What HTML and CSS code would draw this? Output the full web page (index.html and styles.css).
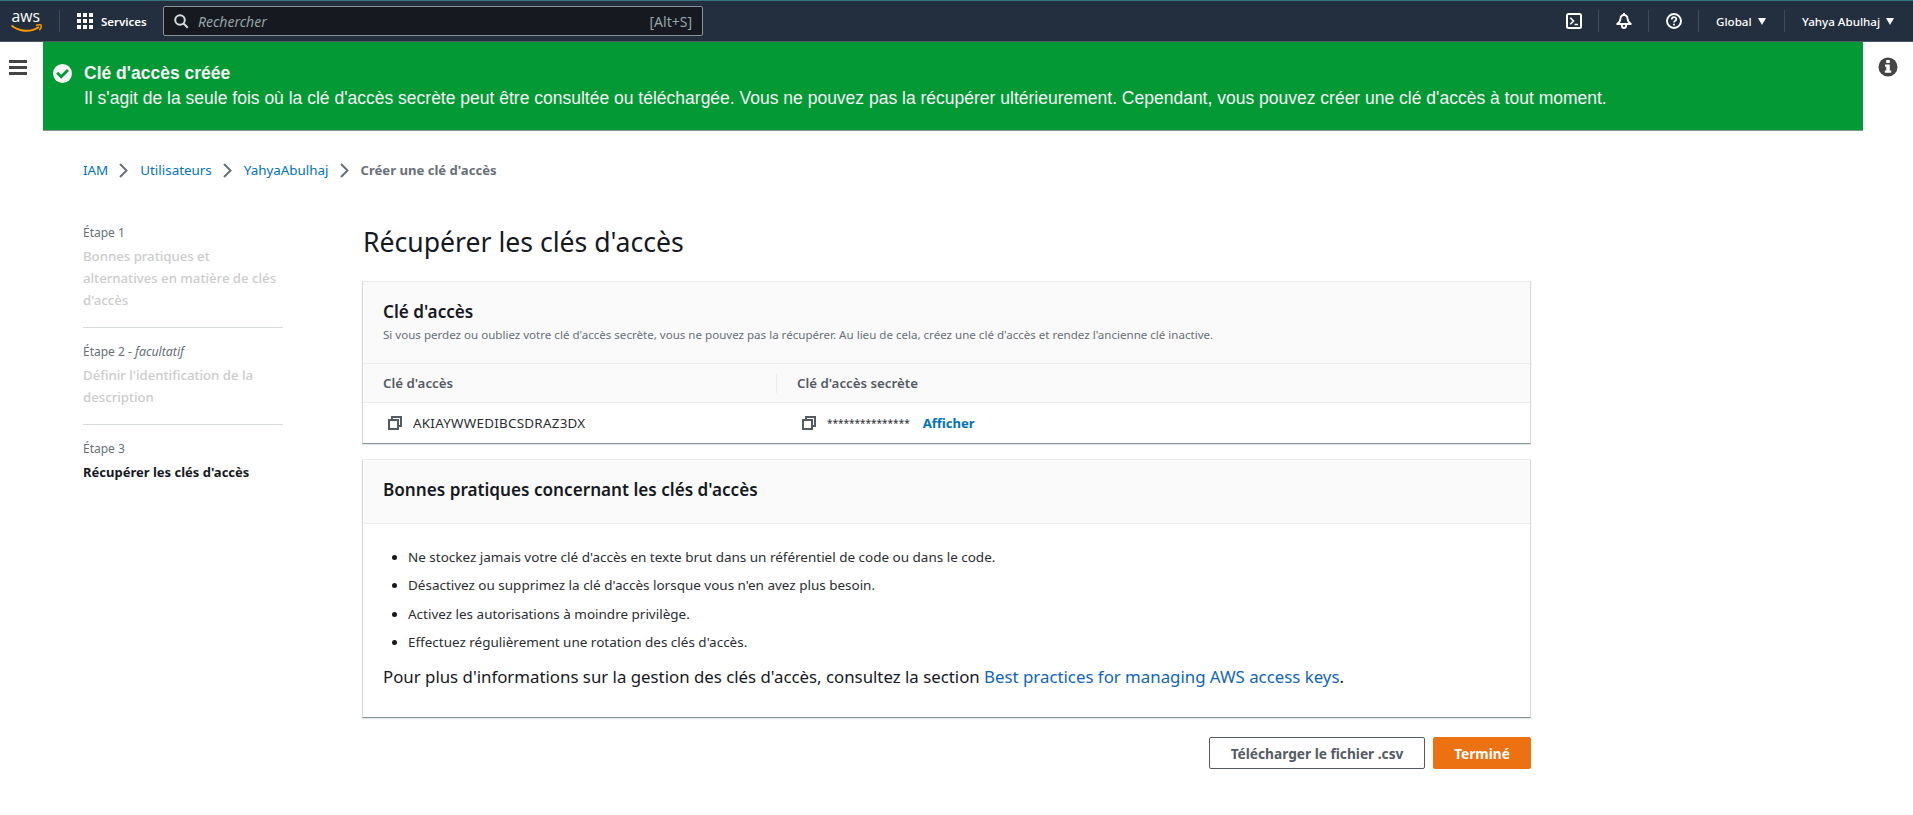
FILE: index.html
```
<!DOCTYPE html>
<html lang="fr">
<head>
<meta charset="utf-8">
<title>Créer une clé d'accès</title>
<link rel="stylesheet" href="styles.css">
</head>
<body>
<header class="topnav">
  <svg class="logo" width="34" height="38" viewBox="0 0 34 38"><text x="0.500" y="19.500" class="logo-word" textLength="28.500" lengthAdjust="spacingAndGlyphs">aws</text><path d="M0.500 23.500C8 30 20 30.500 28 25" fill="none" stroke="#f90" stroke-width="1.900"/><path d="M25 23.500C27.500 22.500 30 22.700 30.200 23.200C30.500 24.300 29.800 26.500 28.300 28.200" fill="none" stroke="#f90" stroke-width="1.500"/></svg>
  <i class="sep sep-logo"></i>
  <svg class="grid-icon" width="16" height="16" viewBox="0 0 16 16" fill="#fff"><path d="M0 0h4v4H0zM6 0h4v4H6zM12 0h4v4h-4zM0 6h4v4H0zM6 6h4v4H6zM12 6h4v4h-4zM0 12h4v4H0zM6 12h4v4H6zM12 12h4v4h-4z"/></svg>
  <span class="services">Services</span>
  <div class="search">
    <svg width="15" height="15" viewBox="0 0 15 15" fill="none" stroke="#d5dbdb" stroke-width="2"><circle cx="6" cy="6" r="4.800"/><path d="M9.500 9.500l4.300 4.300"/></svg>
    <em>Rechercher</em><span class="hint">[Alt+S]</span>
  </div>
  <div class="nav-right">
    <span class="nav-icon"><svg width="16" height="16" viewBox="0 0 16 16" fill="none" stroke="#fff" stroke-width="2"><rect x="1" y="1" width="14" height="14" rx="1.500"/><path d="M4.300 4.800L7.500 8l-3.200 3.200M8.500 11.500H12" stroke-width="1.600"/></svg></span>
    <i class="sep"></i>
    <span class="nav-icon"><svg width="16" height="16" viewBox="0 0 16 16" fill="none" stroke="#fff" stroke-width="1.900" stroke-linejoin="round"><path d="M1.200 11C3.300 9.500 4.300 8.500 4.500 5.500a3.500 3.500 0 0 1 7 0c.2 3 1.200 4 3.300 5.500zM8 2V0M5.800 12a2.200 3 0 0 0 4.400 0"/></svg></span>
    <i class="sep"></i>
    <span class="nav-icon"><svg width="16" height="16" viewBox="0 0 16 16" fill="none" stroke="#fff" stroke-width="1.900"><circle cx="8" cy="8" r="7"/><path d="M5.700 6.600C5.700 3.200 10.300 3.500 10.300 6.200C10.300 7.800 8 7.800 8 9.600M8 10.800v1.700" stroke-width="1.700"/></svg></span>
    <i class="sep"></i>
    <span class="menu menu-region"><span>Global</span><i class="caret"></i></span>
    <i class="sep"></i>
    <span class="menu menu-user"><span>Yahya Abulhaj</span><i class="caret"></i></span>
  </div>
</header>
<div class="shell">
  <aside class="rail-left"><svg width="18" height="16" viewBox="0 0 18 16" fill="#444"><path d="M0 0h18v3H0zM0 6h18v3H0zM0 12h18v3H0z"/></svg></aside>
  <div class="center">
    <div class="flash">
      <svg width="19" height="19" viewBox="0 0 19 19"><circle cx="9.500" cy="9.500" r="9.500" fill="#f5f5f5"/><path d="M4.200 8.800l4 4 6.800-6.800" fill="none" stroke="#039a35" stroke-width="2.800"/></svg>
      <div class="flash-text">
        <div><b>Clé d'accès créée</b></div>
        <div><span>Il s'agit de la seule fois où la clé d'accès secrète peut être consultée ou téléchargée. Vous ne pouvez pas la récupérer ultérieurement. Cependant, vous pouvez créer une clé d'accès à tout moment.</span></div>
      </div>
    </div>
    <nav class="crumbs">
      <a>IAM</a><svg class="chev" width="9" height="15" viewBox="0 0 9 15"><path d="M1 1l6.500 6.500L1 14"/></svg>
      <a>Utilisateurs</a><svg class="chev" width="9" height="15" viewBox="0 0 9 15"><path d="M1 1l6.500 6.500L1 14"/></svg>
      <a>YahyaAbulhaj</a><svg class="chev" width="9" height="15" viewBox="0 0 9 15"><path d="M1 1l6.500 6.500L1 14"/></svg>
      <b>Créer une clé d'accès</b>
    </nav>
    <div class="wizard">
      <ol class="steps">
        <li><div class="step-no">Étape 1</div><div class="step-name">Bonnes pratiques et<br>alternatives en matière de clés<br>d'accès</div></li>
        <li><div class="step-no">Étape 2 - <em>facultatif</em></div><div class="step-name">Définir l'identification de la<br>description</div></li>
        <li><div class="step-no">Étape 3</div><div class="step-name current">Récupérer les clés d'accès</div></li>
      </ol>
      <main class="main">
        <h1>Récupérer les clés d'accès</h1>
        <section class="card">
          <div class="card-head head-keys">
            <h2>Clé d'accès</h2>
            <p>Si vous perdez ou oubliez votre clé d'accès secrète, vous ne pouvez pas la récupérer. Au lieu de cela, créez une clé d'accès et rendez l'ancienne clé inactive.</p>
          </div>
          <div class="row row-head"><div class="cell first">Clé d'accès</div><div class="cell">Clé d'accès secrète</div></div>
          <div class="row row-body">
            <div class="cell"><svg class="copy" width="14" height="14" viewBox="0 0 14 14"><path d="M1 4h9v9H1zM4 4V1h9v9h-3"/></svg><span class="key">AKIAYWWEDIBCSDRAZ3DX</span></div>
            <div class="cell"><svg class="copy" width="14" height="14" viewBox="0 0 14 14"><path d="M1 4h9v9H1zM4 4V1h9v9h-3"/></svg><span class="stars">***************</span><a class="show">Afficher</a></div>
          </div>
        </section>
        <section class="card">
          <div class="card-head head-tips"><h2>Bonnes pratiques concernant les clés d'accès</h2></div>
          <div class="tips">
            <ul>
              <li>Ne stockez jamais votre clé d'accès en texte brut dans un référentiel de code ou dans le code.</li>
              <li>Désactivez ou supprimez la clé d'accès lorsque vous n'en avez plus besoin.</li>
              <li>Activez les autorisations à moindre privilège.</li>
              <li>Effectuez régulièrement une rotation des clés d'accès.</li>
            </ul>
            <p class="more">Pour plus d'informations sur la gestion des clés d'accès, consultez la section <a>Best practices for managing AWS access keys</a>.</p>
          </div>
        </section>
        <div class="actions"><button class="btn">Télécharger le fichier .csv</button><button class="btn primary">Terminé</button></div>
      </main>
    </div>
  </div>
  <aside class="rail-right"><svg width="20" height="20" viewBox="0 0 20 20"><circle cx="10" cy="10" r="9.500" fill="#444"/><path d="M8.200 3h3.600v3H8.200zM7 7.500h4.800V13.500H13.200v2.300H6.800v-2.300h1.500V9.800H7z" fill="#fff"/></svg></aside>
</div>
</body>
</html>
```
FILE: styles.css
```
* { box-sizing: border-box; }
body { margin: 0; background: #fff; color: #16191f; font-family: "Noto Sans", sans-serif; font-size: 13px; }
h1, h2, p, ul, ol { margin: 0; padding: 0; font-weight: normal; }
span, a, b, em { white-space: nowrap; }
svg { flex: none; display: block; }
a { color: #0073bb; }

.topnav { height: 42px; display: flex; align-items: center; background: #232f3e; border-top: 1px solid #35757f; border-bottom: 1px solid #4c5664; color: #fff; padding-left: 11px; }
.logo-word { font: 500 17px "Open Sans", sans-serif; fill: #fff; }
.sep { width: 1px; height: 22px; background: #414b58; flex: none; }
.sep-logo { margin-left: 14px; margin-right: 17px; }
.services { width: 70px; padding-left: 8px; font-weight: 600; font-size: 11.5px; }
.search { width: 540px; height: 30px; display: flex; align-items: center; padding: 0 10px 0 10px; background: #161920; border: 1px solid #879596; border-radius: 2px; color: #95a5a6; font-size: 14px; }
.search em { margin-left: 9px; }
.hint { margin-left: auto; }
.nav-right { margin-left: auto; display: flex; align-items: center; font-weight: 500; font-size: 11.6px; }
.nav-icon { width: 49px; display: flex; justify-content: center; }
.menu { display: flex; align-items: center; padding-left: 17px; }
.menu-region { width: 85px; }
.menu-user { width: 128px; }
.caret { margin-left: 6px; border: 4px solid transparent; border-top: 7px solid #fff; border-bottom: 0; }

.shell { display: flex; }
.rail-left { width: 43px; padding: 18px 0 0 9px; flex: none; }
.rail-right { width: 50px; padding: 15px 0 0 15px; flex: none; }
.center { width: 1820px; }
.flash { height: 89px; display: flex; gap: 12px; padding: 22px 9px 0 10px; background: #039a35; border-bottom: 1px solid #879596; color: #f5f5f5; font: 17.5px/25px "Liberation Sans", sans-serif; }
.flash-text { margin-top: -3px; }

.crumbs { display: flex; align-items: center; height: 20px; margin: 29px 0 0 40px; }
.crumbs a { font-size: 13.4px; }
.crumbs b { font-size: 13.1px; color: #687078; }
.chev { margin: 0 11.8px 0 11.2px; fill: none; stroke: #687078; stroke-width: 2; }

.wizard { display: flex; padding: 42px 0 0 40px; }
.steps { width: 200px; list-style: none; flex: none; }
.steps li { border-bottom: 1px solid #d5dbdb; padding-bottom: 16px; margin-bottom: 13px; }
.steps li:last-child { border: 0; }
.step-no { font-size: 12px; line-height: 20px; height: 21px; color: #687078; padding-top: 1px; }
.step-no em { font-size: 12.3px; }
.step-name { font-size: 13.2px; line-height: 22px; padding-top: 2px; font-weight: 500; color: #ccc; white-space: nowrap; }
.current { font-size: 13px; color: #16191f; font-weight: 700; }

.main { width: 1169px; margin-left: 79px; }
h1 { font-size: 26.6px; line-height: 36px; height: 67px; padding-left: 1px; margin-top: -8px; padding-top: 10px; }
.card { border: 1px solid #d5dbdb; border-top-color: #eaeded; border-bottom-color: #879596; margin-bottom: 15px; box-shadow: 0 1px 1px #e3e8e9; }
.card-head { background: #fafafa; border-bottom: 1px solid #eaeded; padding-left: 20px; }
.head-keys { height: 82px; padding-top: 18px; }
.head-tips { height: 64px; padding-top: 18px; }
h2 { font-size: 17.15px; font-weight: 600; line-height: 23px; }
.head-keys p { font-size: 11.57px; line-height: 22px; padding-top: 1px; color: #687078; }
.row { display: grid; grid-template-columns: 414px 1fr; }
.cell { display: flex; align-items: center; padding-left: 20px; }
.row-head { height: 39px; background: #fafafa; border-bottom: 1px solid #eaeded; font-size: 13.3px; font-weight: 600; color: #545b64; }
.row-head .first { border-right: 1px solid #eaeded; height: 19px; align-self: center; }
.row-body { height: 40px; color: #2a2e33; }
.copy { margin: 0 11px 0 5px; fill: none; stroke: #545b64; stroke-width: 2; }
.key { font-size: 13.4px; letter-spacing: 0.26px; }
.stars { font-size: 10px; }
.show { margin-left: 13px; font-size: 13.1px; font-weight: 700; }
.tips { height: 193px; padding: 22px 20px 0; }
ul { padding-left: 25px; }
li::marker { color: #16191f; }
.tips li { font-size: 13.47px; line-height: 22px; margin-bottom: 6.3px; color: #2a2e33; }
.more { font-size: 16.82px; line-height: 24px; margin-top: 12px; }
.more a { color: #1166bb; }
.actions { display: flex; justify-content: flex-end; gap: 8px; padding-top: 4px; }
.btn { width: 216px; height: 32px; padding: 0; border: 1px solid #545b64; border-radius: 2px; background: #fff; color: #545b64; font: 700 13.7px "Noto Sans", sans-serif; }
.primary { width: 98px; background: #ec7211; border-color: #ec7211; color: #fff; }
```
